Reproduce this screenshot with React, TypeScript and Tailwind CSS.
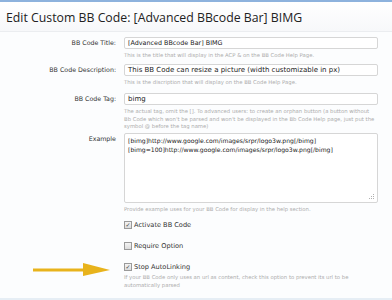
import React from "react";

const small = { fontFamily: '"DejaVu Sans", Verdana, sans-serif' };

function Row({ label, children }: { label: string; children: React.ReactNode }) {
  return (
    <div className="flex items-start">
      <div className="w-[116px] shrink-0 text-right text-[6.3px] leading-[12px] text-[#333]">{label}</div>
      <div className="ml-[8px] w-[254px]">{children}</div>
    </div>
  );
}

function Hint({ children }: { children: React.ReactNode }) {
  return <p className="mt-[3px] text-[5.3px] leading-[7.5px] text-[#acacac]">{children}</p>;
}

function Check({ label, checked }: { label: string; checked: boolean }) {
  return (
    <label className="flex items-center gap-[2px] text-[6.6px] leading-[10px] text-[#333]">
      <span className="flex h-[8px] w-[8px] items-center justify-center border border-[#9a9a9a] bg-gradient-to-b from-[#f4f4f4] to-[#dcdcdc] text-[6px] leading-none text-[#444]">
        {checked ? "✓" : ""}
      </span>
      {label}
    </label>
  );
}

export default function App() {
  return (
    <div className="relative h-[300px] w-[392px] overflow-hidden border-t-2 border-[#8db2dd] bg-[#fcfdfe]" style={small}>
      <div className="h-[30px] border-b border-[#ebedf0] bg-gradient-to-b from-white to-[#f7f8fa] px-[6px] pt-[8px]">
        <h1 className="whitespace-nowrap text-[12.3px] leading-[16px] text-[#222]" style={{ fontFamily: '"Open Sans", sans-serif' }}>
          Edit Custom BB Code: [Advanced BBcode Bar] BIMG
        </h1>
      </div>

      <div className="flex flex-col pt-[5px]">
        <Row label="BB Code Title:">
          <div className="h-[12px] rounded-[2px] border border-[#d6d6d6] bg-white px-[3px] text-[6.4px] leading-[10px] text-[#222]">
            [Advanced BBcode Bar] BIMG
          </div>
          <Hint>This is the title that will display in the ACP &amp; on the BB Code Help Page.</Hint>
        </Row>

        <div className="mt-[4px]">
          <Row label="BB Code Description:">
            <div className="h-[12px] rounded-[2px] border border-[#d6d6d6] bg-white px-[3px] text-[7px] leading-[10px] text-[#222]">
              This BB Code can resize a picture (width customizable in px)
            </div>
            <Hint>This is the discription that will display on the BB Code Help Page.</Hint>
          </Row>
        </div>

        <div className="mt-[7px]">
          <Row label="BB Code Tag:">
            <div className="h-[12px] rounded-[2px] border border-[#d6d6d6] bg-white px-[3px] text-[7px] leading-[10px] text-[#222]">
              bimg
            </div>
            <Hint>
              The actual tag, omit the []. To advanced users: to create an orphan button (a button without
              <br />
              Bb Code which won't be parsed and won't be displayed in the Bb Code Help page, just put the
              <br />
              symbol @ before the tag name)
            </Hint>
          </Row>
        </div>

        <div className="mt-[2px]">
          <Row label="Example">
            <div className="relative h-[70px] rounded-[2px] border border-[#d6d6d6] bg-white px-[3px] pt-[2px] text-[6.1px] leading-[9px] text-[#222]">
              <div>[bimg]http://www.google.com/images/srpr/logo3w.png[/bimg]</div>
              <div>[bimg=100]http://www.google.com/images/srpr/logo3w.png[/bimg]</div>
              <svg className="absolute bottom-[2px] right-[2px]" width="6" height="6" viewBox="0 0 6 6">
                <rect x="4" y="0" width="1" height="1" fill="#b0b0b0" />
                <rect x="2" y="2" width="1" height="1" fill="#b0b0b0" />
                <rect x="4" y="2" width="1" height="1" fill="#b0b0b0" />
                <rect x="0" y="4" width="1" height="1" fill="#b0b0b0" />
                <rect x="2" y="4" width="1" height="1" fill="#b0b0b0" />
                <rect x="4" y="4" width="1" height="1" fill="#b0b0b0" />
              </svg>
            </div>
            <Hint>Provide example uses for your BB Code for display in the help section.</Hint>
          </Row>
        </div>

        <div className="ml-[124px] mt-[7px] flex w-[254px] flex-col">
          <Check label="Activate BB Code" checked />
          <div className="mt-[11px]">
            <Check label="Require Option" checked={false} />
          </div>
          <div className="mt-[11px]">
            <Check label="Stop AutoLinking" checked />
          </div>
          <p className="mt-[2px] text-[5.3px] leading-[7.5px] text-[#acacac]">
            If your BB Code only uses an url as content, check this option to prevent its url to be
            <br />
            automatically parsed
          </p>
        </div>
      </div>

      <svg className="absolute left-[33px] top-[261px]" width="78" height="14" viewBox="0 0 78 14">
        <rect x="0" y="5.5" width="52" height="3" fill="#e8b31c" />
        <polygon points="50,0 77,7 50,13" fill="#e8b31c" />
      </svg>

      <div className="absolute bottom-0 left-0 h-[2px] w-full bg-[#e6eef5]" />
    </div>
  );
}
